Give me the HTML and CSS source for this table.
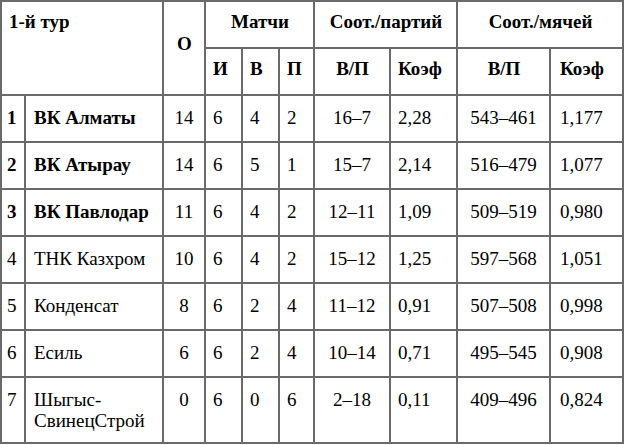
FILE: index.html
```html
<!DOCTYPE html>
<html lang="ru">
<head>
<meta charset="utf-8">
<title>1-й тур</title>
<link rel="stylesheet" href="styles.css">
</head>
<body>
<table class="standings">
  <colgroup>
    <col class="c-pos"><col class="c-team"><col class="c-pts">
    <col class="c-m"><col class="c-w"><col class="c-l">
    <col class="c-sets"><col class="c-sk"><col class="c-balls"><col class="c-bk">
  </colgroup>
  <thead>
    <tr class="hrow">
      <th colspan="2" rowspan="2" class="left">1-й тур</th>
      <th rowspan="2" class="mid">О</th>
      <th colspan="3">Матчи</th>
      <th colspan="2">Соот./партий</th>
      <th colspan="2">Соот./мячей</th>
    </tr>
    <tr class="hrow">
      <th class="left">И</th>
      <th class="left">В</th>
      <th class="left">П</th>
      <th>В/П</th>
      <th class="left">Коэф</th>
      <th>В/П</th>
      <th class="left last">Коэф</th>
    </tr>
  </thead>
  <tbody>
    <tr class="row top">
      <td class="pos">1</td><td class="team">ВК Алматы</td><td class="ctr">14</td>
      <td>6</td><td>4</td><td>2</td><td class="ctr">16–7</td><td>2,28</td><td class="ctr">543–461</td><td class="last">1,177</td>
    </tr>
    <tr class="row top">
      <td class="pos">2</td><td class="team">ВК Атырау</td><td class="ctr">14</td>
      <td>6</td><td>5</td><td>1</td><td class="ctr">15–7</td><td>2,14</td><td class="ctr">516–479</td><td class="last">1,077</td>
    </tr>
    <tr class="row top">
      <td class="pos">3</td><td class="team">ВК Павлодар</td><td class="ctr">11</td>
      <td>6</td><td>4</td><td>2</td><td class="ctr">12–11</td><td>1,09</td><td class="ctr">509–519</td><td class="last">0,980</td>
    </tr>
    <tr class="row">
      <td class="pos">4</td><td class="team">ТНК Казхром</td><td class="ctr">10</td>
      <td>6</td><td>4</td><td>2</td><td class="ctr">15–12</td><td>1,25</td><td class="ctr">597–568</td><td class="last">1,051</td>
    </tr>
    <tr class="row">
      <td class="pos">5</td><td class="team">Конденсат</td><td class="ctr">8</td>
      <td>6</td><td>2</td><td>4</td><td class="ctr">11–12</td><td>0,91</td><td class="ctr">507–508</td><td class="last">0,998</td>
    </tr>
    <tr class="row">
      <td class="pos">6</td><td class="team">Есиль</td><td class="ctr">6</td>
      <td>6</td><td>2</td><td>4</td><td class="ctr">10–14</td><td>0,71</td><td class="ctr">495–545</td><td class="last">0,908</td>
    </tr>
    <tr class="row tall">
      <td class="pos">7</td><td class="team">Шыгыс-<br>СвинецСтрой</td><td class="ctr">0</td>
      <td>6</td><td>0</td><td>6</td><td class="ctr">2–18</td><td>0,11</td><td class="ctr">409–496</td><td class="last">0,824</td>
    </tr>
  </tbody>
</table>
</body>
</html>
```

FILE: styles.css
```css
html, body {
  margin: 0;
  padding: 0;
  background: #ffffff;
}

body {
  font-family: "Liberation Serif", "Times New Roman", serif;
  font-size: 19px;
  line-height: 21px;
  color: #000000;
}

.standings {
  table-layout: fixed;
  width: 624px;
  border-collapse: separate;
  border-spacing: 0;
  border-left: 2px solid #6a6a6a;
  border-top: 2px solid #6a6a6a;
}

.c-pos   { width: 24px; }
.c-team  { width: 138px; }
.c-pts   { width: 42px; }
.c-m     { width: 37px; }
.c-w     { width: 37px; }
.c-l     { width: 35px; }
.c-sets  { width: 76px; }
.c-sk    { width: 67px; }
.c-balls { width: 93px; }
.c-bk    { width: 73px; }

.standings th,
.standings td {
  border-right: 2px solid #6a6a6a;
  border-bottom: 2px solid #6a6a6a;
  padding: 11px 6px 0 7px;
  vertical-align: top;
  text-align: left;
  white-space: nowrap;
}

.standings th {
  font-weight: bold;
  text-align: center;
  padding-top: 9px;
}

.standings th.left { text-align: left; }

.standings th.mid {
  vertical-align: middle;
  padding-top: 9px;
  padding-bottom: 19px;
}

.hrow { height: 47px; }
.row  { height: 47px; }
.tall { height: 66px; }

.standings .pos { padding-left: 5px; padding-right: 2px; }
.standings .team { padding-left: 8px; }
.standings .ctr { text-align: center; padding-left: 6px; }
.standings .last { padding-left: 9px; }

.top .pos,
.top .team { font-weight: bold; }
```
